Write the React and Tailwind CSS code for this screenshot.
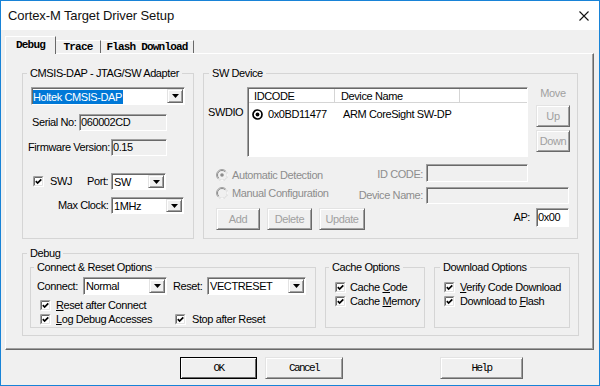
import React from "react";

const mono = "font-['Liberation_Mono',monospace]";

function Btn({ className = "", disabled, children }) {
    return (
        <button
            type="button"
            className={`flex items-center justify-center bg-[#f0f0f0] border border-[#e3e3e3] border-r-[#696969] border-b-[#696969] shadow-[inset_1px_1px_0_#fff,inset_-1px_-1px_0_#a0a0a0] ${disabled ? "text-[#a0a0a0]" : "text-black"} ${className}`}
        >
            {children}
        </button>
    );
}

function Box({ className = "", children }) {
    return (
        <div
            className={`flex items-center pl-[1px] whitespace-nowrap border border-[#a0a0a0] border-r-white border-b-white shadow-[inset_1px_1px_0_#696969] ${className}`}
        >
            {children}
        </div>
    );
}

function Select({ className = "", children }) {
    return (
        <div
            className={`flex bg-white border border-[#a0a0a0] border-r-white border-b-white shadow-[inset_1px_1px_0_#696969] ${className}`}
        >
            <div className="flex-1 flex items-center pl-[2px] pt-[1px] overflow-hidden whitespace-nowrap">
                {children}
            </div>
            <div className="w-[16px] my-[1px] mr-[1px] flex items-center justify-center bg-[#f0f0f0] border border-[#e3e3e3] border-r-[#696969] border-b-[#696969] shadow-[inset_1px_1px_0_#fff,inset_-1px_-1px_0_#a0a0a0]">
                <svg width="7" height="4" viewBox="0 0 7 4">
                    <path d="M0 0H7L3.5 4Z" fill="#000" />
                </svg>
            </div>
        </div>
    );
}

function Check() {
    return (
        <svg width="11" height="11" viewBox="0 0 11 11" className="shrink-0">
            <rect x="0" y="0" width="11" height="11" fill="#fff" />
            <path d="M0.5 10.5V0.5H10.5" fill="none" stroke="#a0a0a0" />
            <path d="M1.5 9.5V1.5H9.5" fill="none" stroke="#696969" />
            <path d="M0.5 10.5H10.5V0.5" fill="none" stroke="#fff" />
            <path d="M1.5 9.5H9.5V1.5" fill="none" stroke="#e3e3e3" />
            <path d="M2.8 5.2L4.6 7.1L8.3 3.3" fill="none" stroke="#000" strokeWidth="1.7" />
        </svg>
    );
}

function Radio({ on, disabled }) {
    if (!disabled) {
        return (
            <svg width="11" height="11" viewBox="0 0 11 11" className="shrink-0">
                <circle cx="5.5" cy="5.5" r="4.5" fill="#fff" stroke="#000" strokeWidth="1.7" />
                {on && <circle cx="5.5" cy="5.5" r="1.9" fill="#000" />}
            </svg>
        );
    }
    return (
        <svg width="12" height="12" viewBox="0 0 12 12" className="shrink-0">
            <circle cx="6" cy="6" r="5.5" fill="#f0f0f0" stroke="#a0a0a0" />
            <path d="M9.9 2.1A5.5 5.5 0 0 1 2.1 9.9" fill="none" stroke="#fff" />
            <path d="M2.8 9.2A4.5 4.5 0 0 1 9.2 2.8" fill="none" stroke="#8d8d8d" />
            {on && <circle cx="6" cy="6" r="1.8" fill="#8d8d8d" />}
        </svg>
    );
}

function Group({ title, className = "", legendClass = "ml-[4px]", children }) {
    return (
        <fieldset className={`border border-[#d5d5d5] flex flex-col ${className}`}>
            <legend className={`px-[3px] leading-[14px] ${legendClass}`}>{title}</legend>
            {children}
        </fieldset>
    );
}

function U({ children }) {
    return <span className="underline underline-offset-[1px]">{children}</span>;
}

export default function App() {
    return (
        <div className="w-[600px] h-[386px] bg-[#f0f0f0] border border-[#1883d7] flex flex-col overflow-hidden text-[11px] tracking-[-0.4px] text-black font-['Liberation_Sans',Arial,sans-serif]">
            {/* Title bar */}
            <div className="h-[29px] shrink-0 bg-white flex items-center pl-[7px]">
                <span className="text-[13px] tracking-[-0.1px] text-[#111]">Cortex-M Target Driver Setup</span>
                <svg width="10" height="10" viewBox="0 0 10 10" className="ml-auto mr-[10px]">
                    <path d="M0.5 0.5L9.5 9.5M9.5 0.5L0.5 9.5" stroke="#111" strokeWidth="1.1" />
                </svg>
            </div>

            <div className="flex flex-col pl-[4px] pt-[6px]">
                {/* Tabs */}
                <div className={`flex items-end h-[18px] ${mono} font-bold text-[11px] tracking-[-0.8px]`}>
                    <div className="relative z-10 w-[51px] h-[18px] flex items-center justify-center bg-[#f0f0f0] border-t border-l border-white border-r border-r-[#696969]">
                        Debug
                    </div>
                    <div className="w-[45px] h-[14px] flex items-center justify-center border-t border-white border-r border-r-[#696969]">
                        Trace
                    </div>
                    <div className="w-[93px] h-[14px] flex items-center justify-center border-t border-white border-r border-r-[#696969]">
                        Flash Download
                    </div>
                </div>

                {/* Tab page */}
                <div className="-mt-px w-[589px] h-[297px] border border-white border-r-[#696969] border-b-[#696969] shadow-[inset_-1px_-1px_0_#a0a0a0] pl-[16px] pt-[12px] flex flex-col">
                    <div className="flex items-start">
                        {/* CMSIS-DAP adapter */}
                        <Group title="CMSIS-DAP - JTAG/SW Adapter" className="w-[172px] h-[173px]">
                            <Select className="mt-[7px] ml-[8px] w-[154px] h-[18px]">
                                <span className="bg-[#0078d7] text-white pr-[1px] -ml-[1px] leading-[14px]">Holtek CMSIS-DAP</span>
                            </Select>
                            <div className="mt-[9px] ml-[9px] flex items-center">
                                <span className="w-[47px] whitespace-nowrap">Serial No:</span>
                                <Box className="w-[88px] h-[17px]">060002CD</Box>
                            </div>
                            <div className="mt-[8px] ml-[5px] flex items-center">
                                <span className="w-[83px] whitespace-nowrap">Firmware Version:</span>
                                <Box className="w-[56px] h-[17px]">0.15</Box>
                            </div>
                            <div className="mt-[17px] ml-[10px] flex items-center h-[17px]">
                                <Check />
                                <span className="ml-[6px] w-[37px]">SWJ</span>
                                <span className="w-[24px]">Port:</span>
                                <Select className="w-[55px] h-[17px]">SW</Select>
                            </div>
                            <div className="mt-[7px] ml-[35px] flex items-center">
                                <span className="w-[53px] whitespace-nowrap">Max Clock:</span>
                                <Select className="w-[73px] h-[17px]">1MHz</Select>
                            </div>
                        </Group>

                        {/* SW Device */}
                        <Group title="SW Device" className="ml-[9px] w-[375px] h-[173px]" legendClass="ml-[5px]">
                            <div className="mt-[7px] flex items-start">
                                <span className="ml-[4px] w-[39px] mt-[18px] leading-[14px]">SWDIO</span>
                                <div className="w-[281px] h-[70px] bg-white border border-[#a0a0a0] border-r-white border-b-white shadow-[inset_1px_1px_0_#696969] pl-[1px] pt-[1px] flex flex-col">
                                    <div className="h-[14px] flex border-b border-[#d5d5d5] leading-[13px]">
                                        <div className="w-[86px] pl-[5px] pt-[1px] border-r border-[#d5d5d5]">IDCODE</div>
                                        <div className="w-[125px] pl-[6px] pt-[1px] border-r border-[#d5d5d5]">Device Name</div>
                                    </div>
                                    <div className="mt-[4px] h-[15px] flex items-center">
                                        <div className="w-[94px] pl-[3px] flex items-center gap-[5px]">
                                            <Radio on />
                                            <span>0x0BD11477</span>
                                        </div>
                                        <span>ARM CoreSight SW-DP</span>
                                    </div>
                                </div>
                                <div className="ml-[8px] w-[34px] flex flex-col items-center">
                                    <span className="-mt-px leading-[14px] text-[#a0a0a0]">Move</span>
                                    <Btn disabled className="mt-[5px] w-[34px] h-[22px]">Up</Btn>
                                    <Btn disabled className="mt-[3px] w-[34px] h-[22px]">Down</Btn>
                                </div>
                            </div>

                            <div className="mt-[7px] ml-[12px] flex items-start text-[#8d8d8d]">
                                <div className="mt-[4px] w-[130px] h-[14px] flex items-center">
                                    <Radio on disabled />
                                    <span className="ml-[4px] whitespace-nowrap">Automatic Detection</span>
                                </div>
                                <span className="mt-[3px] w-[80px] pr-[3px] text-right leading-[14px]">ID CODE:</span>
                                <Box className="w-[102px] h-[18px]" />
                            </div>
                            <div className="mt-[5px] ml-[12px] flex items-start text-[#8d8d8d]">
                                <div className="-mt-px w-[130px] h-[14px] flex items-center">
                                    <Radio disabled />
                                    <span className="ml-[4px] whitespace-nowrap">Manual Configuration</span>
                                </div>
                                <span className="mt-[1px] w-[80px] pr-[3px] text-right leading-[14px] whitespace-nowrap">Device Name:</span>
                                <Box className="w-[143px] h-[17px]" />
                            </div>
                            <div className="mt-[4px] ml-[12px] flex items-start">
                                <Btn disabled className="w-[44px] h-[22px]">Add</Btn>
                                <Btn disabled className="ml-[7px] w-[45px] h-[22px]">Delete</Btn>
                                <Btn disabled className="ml-[7px] w-[46px] h-[22px]">Update</Btn>
                                <div className="ml-auto mr-[8px] flex items-center">
                                    <span>AP:</span>
                                    <Box className="ml-[6px] w-[33px] h-[19px] bg-white">0x00</Box>
                                </div>
                            </div>
                        </Group>
                    </div>

                    {/* Debug */}
                    <Group title="Debug" className="mt-[7px] w-[557px] h-[90px]">
                        <div className="ml-[7px] flex items-start">
                            <Group title="Connect & Reset Options" className="w-[286px] h-[68px]" legendClass="ml-[3px]">
                                <div className="mt-[3px] ml-[6px] flex items-center">
                                    <span className="w-[46px]">Connect:</span>
                                    <Select className="w-[84px] h-[18px]">Normal</Select>
                                    <span className="ml-[6px] w-[34px]">Reset:</span>
                                    <Select className="w-[99px] h-[18px]">VECTRESET</Select>
                                </div>
                                <div className="mt-[3px] ml-[9px] h-[14px] flex items-center">
                                    <Check />
                                    <span className="ml-[5px]"><U>R</U>eset after Connect</span>
                                </div>
                                <div className="ml-[9px] h-[14px] flex items-center">
                                    <Check />
                                    <span className="ml-[5px] w-[119px] whitespace-nowrap"><U>L</U>og Debug Accesses</span>
                                    <Check />
                                    <span className="ml-[6px]">Stop after Reset</span>
                                </div>
                            </Group>
                            <Group title="Cache Options" className="ml-[9px] w-[100px] h-[68px]" legendClass="ml-[3px]">
                                <div className="mt-[6px] ml-[9px] h-[14px] flex items-center">
                                    <Check />
                                    <span className="ml-[4px]">Cache <U>C</U>ode</span>
                                </div>
                                <div className="ml-[9px] h-[14px] flex items-center">
                                    <Check />
                                    <span className="ml-[4px]">Cache <U>M</U>emory</span>
                                </div>
                            </Group>
                            <Group title="Download Options" className="ml-[9px] w-[136px] h-[68px]" legendClass="ml-[5px]">
                                <div className="mt-[6px] ml-[9px] h-[14px] flex items-center">
                                    <Check />
                                    <span className="ml-[5px] whitespace-nowrap"><U>V</U>erify Code Download</span>
                                </div>
                                <div className="ml-[9px] h-[14px] flex items-center">
                                    <Check />
                                    <span className="ml-[5px] whitespace-nowrap">Download to <U>F</U>lash</span>
                                </div>
                            </Group>
                        </div>
                    </Group>
                </div>

                {/* Dialog buttons */}
                <div className={`mt-[7px] flex ${mono} text-[11px] tracking-[-1.6px]`}>
                    <button
                        type="button"
                        className="ml-[175px] w-[77px] h-[22px] flex items-center justify-center bg-[#f0f0f0] border border-black shadow-[inset_1px_1px_0_#fff,inset_-1px_-1px_0_#696969]"
                    >
                        OK
                    </button>
                    <Btn className="ml-[8px] w-[78px] h-[22px]">Cancel</Btn>
                    <Btn className="ml-[97px] w-[83px] h-[22px]">Help</Btn>
                </div>
            </div>
        </div>
    );
}
